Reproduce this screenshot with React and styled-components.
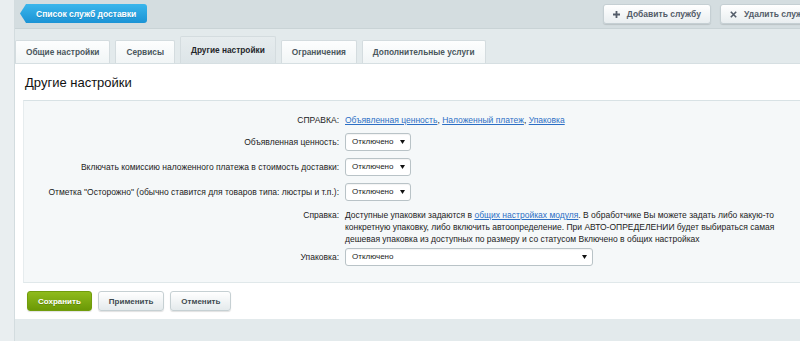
import React from 'react';
import styled, { createGlobalStyle } from 'styled-components';

const Global = createGlobalStyle`
  html, body { margin: 0; padding: 0; }
  body {
    background: #e3eaec;
    font-family: "Liberation Sans", Arial, sans-serif;
    font-size: 8.5px;
    color: #222;
    overflow: hidden;
    width: 800px;
    height: 341px;
  }
`;

const Page = styled.div`
  display: flex;
  width: 830px;
  min-height: 341px;
`;

const LeftStrip = styled.div`
  flex: none;
  width: 14px;
  background: #e9eef0;
  border-right: 1px solid #d3dcdf;
`;

const Main = styled.div`
  flex: 1;
  min-width: 0;
  display: flex;
  flex-direction: column;
`;

const Toolbar = styled.div`
  box-sizing: border-box;
  height: 29px;
  display: flex;
  align-items: flex-start;
  gap: 9px;
  padding: 4px 8px 0 5px;
  background: #d4dde0;
  border-bottom: 1px solid #c9d3d6;
`;

const BackButton = styled.div`
  height: 19px;
  display: flex;
  align-items: center;
  padding: 0 11px 0 16px;
  color: #fff;
  font-weight: bold;
  font-size: 8.5px;
  text-shadow: 0 1px 0 rgba(0, 0, 0, 0.15);
  background: linear-gradient(#3ab6ec, #1b93d5);
  border-radius: 0 3px 3px 0;
  clip-path: polygon(6px 0, 100% 0, 100% 100%, 6px 100%, 0 50%);
`;

const ToolGroup = styled.div`
  margin-left: auto;
  display: flex;
  gap: 9px;
`;

const ToolButton = styled.div`
  box-sizing: border-box;
  height: 20px;
  display: flex;
  align-items: center;
  gap: 7px;
  padding: 0 9px;
  color: #535c69;
  font-weight: bold;
  font-size: 8.5px;
  background: linear-gradient(#ffffff, #e9eef0);
  border: 1px solid #c5cfd3;
  border-radius: 3px;
  box-shadow: 0 1px 1px rgba(0, 0, 0, 0.12);
`;

const TabsBar = styled.div`
  height: 34px;
  display: flex;
  align-items: flex-end;
  gap: 5px;
`;

const Tab = styled.div`
  box-sizing: border-box;
  height: ${(p) => (p.$active ? 27 : 23)}px;
  display: flex;
  align-items: center;
  padding: 0 10px;
  font-weight: bold;
  font-size: 8.3px;
  color: ${(p) => (p.$active ? '#1f262a' : '#4a575d')};
  background: ${(p) =>
    p.$active ? 'linear-gradient(#e6ecee, #dde5e8)' : 'linear-gradient(#fdfefe, #f1f5f6)'};
  border: 1px solid #d4dcdf;
  border-bottom: none;
  border-radius: 2px 2px 0 0;
`;

const Panel = styled.div`
  background: #fff;
  border-top: 1px solid #d6dfe2;
  padding: 0 0 8px 8px;
`;

const Title = styled.div`
  box-sizing: border-box;
  height: 36px;
  padding: 11px 0 0 2px;
  font-size: 13px;
  line-height: 16px;
  color: #111;
`;

const InnerBox = styled.div`
  background: #f5f8f9;
  border-top: 1px solid #d8e2e5;
  border-bottom: 1px solid #e0e8ea;
  border-left: 1px solid #e6ecee;
  padding: 10px 0 13px;
`;

const Field = styled.div`
  display: grid;
  grid-template-columns: 321px 1fr;
  align-items: ${(p) => (p.$top ? 'start' : 'center')};
  height: ${(p) => p.$h}px;
  box-sizing: border-box;
  padding-top: ${(p) => p.$pt || 0}px;
`;

const Label = styled.div`
  text-align: right;
  padding-right: 6px;
  line-height: 12px;
  color: #222;
`;

const Value = styled.div`
  line-height: 12px;
  max-width: ${(p) => p.$max || 'none'};
  color: #222;
`;

const Link = styled.a`
  color: #2c6fc5;
  text-decoration: underline;
`;

const SelectBox = styled.div`
  box-sizing: border-box;
  width: ${(p) => p.$w}px;
  height: 18px;
  display: flex;
  align-items: center;
  justify-content: space-between;
  padding: 0 5px 0 6px;
  font-size: 8px;
  color: #222;
  background: #fff;
  border: 1px solid #b9c3c7;
  border-radius: 3px;
  box-shadow: inset 0 1px 1px rgba(0, 0, 0, 0.05);
`;

const Buttons = styled.div`
  display: flex;
  gap: 6px;
  margin-top: 8px;
  padding-left: 4px;
`;

const Btn = styled.div`
  box-sizing: border-box;
  height: 20px;
  display: flex;
  align-items: center;
  padding: 0 10px;
  font-weight: bold;
  font-size: 8px;
  border-radius: 3px;
  color: ${(p) => (p.$green ? '#fff' : '#3f4a50')};
  text-shadow: ${(p) => (p.$green ? '0 1px 0 rgba(0,0,0,0.2)' : 'none')};
  background: ${(p) =>
    p.$green ? 'linear-gradient(#8fbb1c, #6b9906)' : 'linear-gradient(#ffffff, #e4eaec)'};
  border: 1px solid ${(p) => (p.$green ? '#719d0c' : '#c6d0d3')};
  box-shadow: 0 1px 1px rgba(0, 0, 0, 0.12);
`;

const Arrow = () => (
  <svg width="5" height="4" viewBox="0 0 5 4">
    <path d="M0 0H5L2.5 4Z" fill="#111" />
  </svg>
);

const Select = ({ w }) => (
  <SelectBox $w={w}>
    <span>Отключено</span>
    <Arrow />
  </SelectBox>
);

const PlusIcon = () => (
  <svg width="7" height="7" viewBox="0 0 7 7">
    <path d="M3.5 0V7M0 3.5H7" stroke="#535c69" strokeWidth="1.8" />
  </svg>
);

const CrossIcon = () => (
  <svg width="7" height="7" viewBox="0 0 7 7">
    <path d="M0.8 0.8L6.2 6.2M6.2 0.8L0.8 6.2" stroke="#535c69" strokeWidth="1.6" />
  </svg>
);

export default function App() {
  return (
    <>
      <Global />
      <Page>
        <LeftStrip />
        <Main>
          <Toolbar>
            <BackButton>Список служб доставки</BackButton>
            <ToolGroup>
              <ToolButton>
                <PlusIcon />
                Добавить службу
              </ToolButton>
              <ToolButton>
                <CrossIcon />
                Удалить службу
              </ToolButton>
            </ToolGroup>
          </Toolbar>
          <TabsBar>
            <Tab>Общие настройки</Tab>
            <Tab>Сервисы</Tab>
            <Tab $active>Другие настройки</Tab>
            <Tab>Ограничения</Tab>
            <Tab>Дополнительные услуги</Tab>
          </TabsBar>
          <Panel>
            <Title>Другие настройки</Title>
            <InnerBox>
              <Field $h={18}>
                <Label>СПРАВКА:</Label>
                <Value>
                  <Link href="#">Объявленная ценность</Link>, <Link href="#">Наложенный платеж</Link>,{' '}
                  <Link href="#">Упаковка</Link>
                </Value>
              </Field>
              <Field $h={25}>
                <Label>Объявленная ценность:</Label>
                <Value>
                  <Select w={66} />
                </Value>
              </Field>
              <Field $h={25}>
                <Label>Включать комиссию наложенного платежа в стоимость доставки:</Label>
                <Value>
                  <Select w={66} />
                </Value>
              </Field>
              <Field $h={25}>
                <Label>Отметка "Осторожно" (обычно ставится для товаров типа: люстры и т.п.):</Label>
                <Value>
                  <Select w={66} />
                </Value>
              </Field>
              <Field $h={41} $pt={5} $top>
                <Label>Справка:</Label>
                <Value $max="440px">
                  Доступные упаковки задаются в <Link href="#">общих настройках модуля</Link>. В обработчике Вы можете
                  задать либо какую-то конкретную упаковку, либо включить автоопределение. При АВТО-ОПРЕДЕЛЕНИИ будет
                  выбираться самая дешевая упаковка из доступных по размеру и со статусом Включено в общих настройках
                </Value>
              </Field>
              <Field $h={24}>
                <Label>Упаковка:</Label>
                <Value>
                  <Select w={248} />
                </Value>
              </Field>
            </InnerBox>
            <Buttons>
              <Btn $green>Сохранить</Btn>
              <Btn>Применить</Btn>
              <Btn>Отменить</Btn>
            </Buttons>
          </Panel>
        </Main>
      </Page>
    </>
  );
}
